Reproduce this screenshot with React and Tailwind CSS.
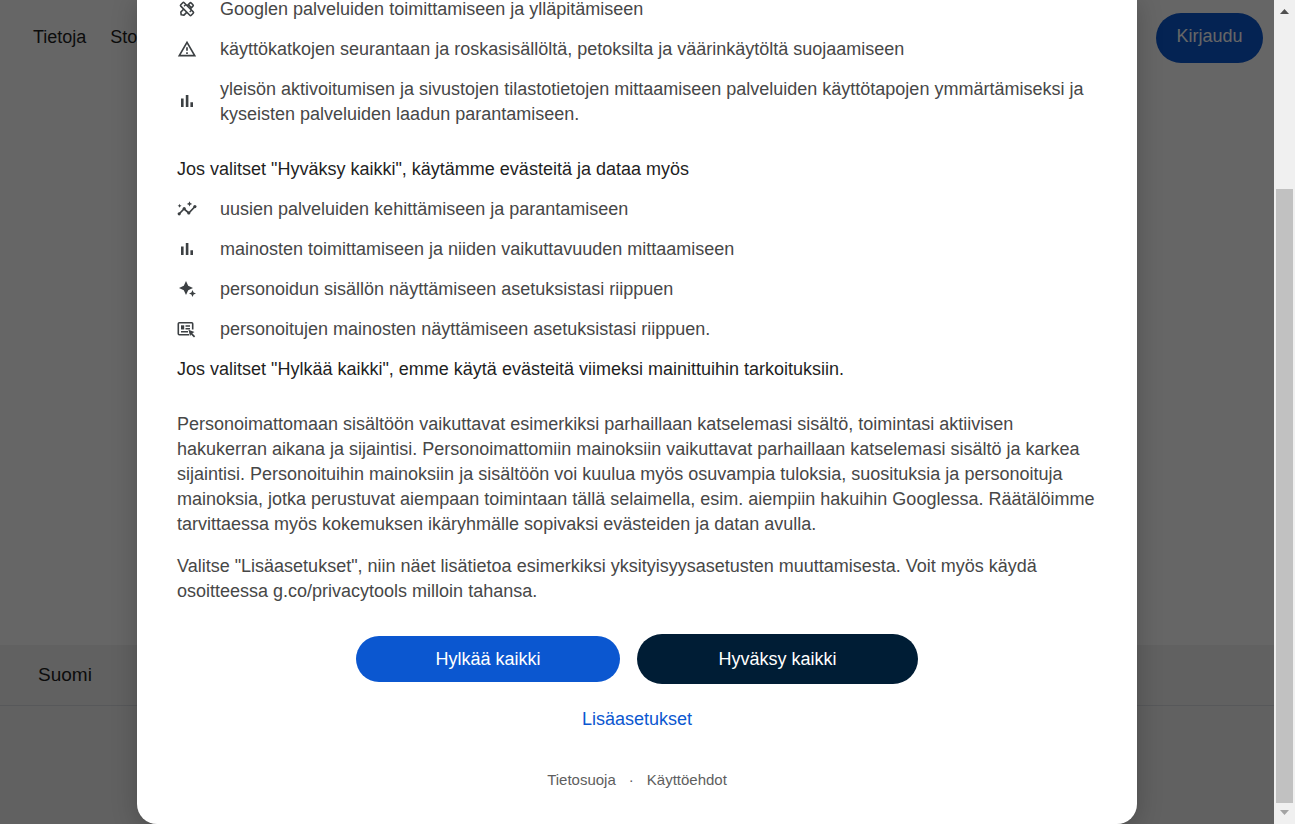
import React from "react";
import { MdOutlineWarningAmber } from "react-icons/md";

function Tools() {
  return (
    <svg viewBox="0 0 20 20" className="h-5 w-5" fill="none" stroke="currentColor" strokeWidth="1.6" aria-hidden="true">
      <g transform="rotate(-45 10 10)">
        <path d="M3.500 7.800h12.700a1 1 0 0 1 1 1v2.400a1 1 0 0 1-1 1H3.500L1.800 10z" strokeLinejoin="round" />
        <path d="M14 7.800v4.400" />
      </g>
      <g transform="rotate(45 10 10)">
        <rect x="2.600" y="7.600" width="14.800" height="4.800" rx="1" fill="white" />
        <path d="M6 7.600v2.600M14 7.600v2.600" strokeWidth="1.300" />
      </g>
    </svg>
  );
}

function Insights() {
  return (
    <svg viewBox="0 0 20 20" className="h-5 w-5" fill="currentColor" aria-hidden="true">
      <path d="M2 15l5-5.200 4.800 4.200L18 7.500" fill="none" stroke="currentColor" strokeWidth="1.700" />
      <circle cx="2.200" cy="14.800" r="1.600" />
      <circle cx="7.200" cy="9.600" r="1.600" />
      <circle cx="11.800" cy="14" r="1.600" />
      <circle cx="17.900" cy="7.600" r="1.600" />
      <path d="M12.500 2.200l.8 1.900 1.900.8-1.900.8-.8 1.900-.8-1.900-1.900-.8 1.900-.8z" />
      <path d="M2.600 4.800l.6 1.400 1.400.6-1.400.6-.6 1.400L2 7.400.6 6.800 2 6.200z" />
    </svg>
  );
}

function Bars() {
  return (
    <svg viewBox="0 0 20 20" className="h-5 w-5" fill="currentColor" aria-hidden="true">
      <path d="M4 7.500h2.600V16H4zM8.800 4h2.600v12H8.800zM13.400 11.200H16V16h-2.600z" />
    </svg>
  );
}

function Sparkle() {
  return (
    <svg viewBox="0 0 20 20" className="h-5 w-5" fill="currentColor" aria-hidden="true">
      <path d="M9 2l2.200 4.800L16 9l-4.800 2.200L9 16l-2.200-4.800L2 9l4.800-2.200z" />
      <path d="M15.500 11l1.100 2.400L19 14.500l-2.400 1.100-1.100 2.400-1.100-2.400-2.400-1.100 2.400-1.100z" />
    </svg>
  );
}

function AdCursor() {
  return (
    <svg viewBox="0 0 20 20" className="h-5 w-5" fill="none" stroke="currentColor" strokeWidth="1.6" aria-hidden="true">
      <path d="M12 15.700H2.300a1 1 0 0 1-1-1V4.800a1 1 0 0 1 1-1h12.400a1 1 0 0 1 1 1v5.700" />
      <path d="M8.500 7H13M8.500 9.800H13M4 12.700h7" strokeWidth="1.4" />
      <path d="M4 6.300h3.200v4.200H4z" fill="currentColor" stroke="none" />
      <path d="M11.500 10.800l6 2.200-2.200 1.200 2.900 3-1.200 1.200-3-2.900-1 1.800z" fill="currentColor" stroke="none" />
    </svg>
  );
}

function Row({ icon, children }) {
  return (
    <li className="flex items-center gap-[23px]">
      <span className="flex h-[22px] w-5 shrink-0 items-center justify-center pb-0.5 text-[#3c4043]">{icon}</span>
      <span>{children}</span>
    </li>
  );
}

function Backdrop() {
  return (
    <div className="flex min-h-screen flex-col bg-white text-[#1f1f1f]">
      <header className="flex items-start justify-between px-[11px] pt-[13px] text-lg leading-6">
        <nav className="flex gap-6 pt-3 pl-[22px]">
          <a href="#tietoja">Tietoja</a>
          <a href="#store">Store</a>
        </nav>
        <button type="button" className="h-[50px] w-[107px] rounded-full bg-[#0b57d0] pb-1 text-white">
          Kirjaudu
        </button>
      </header>
      <footer className="mt-auto h-[179px] bg-[#f2f2f2]">
        <div className="flex h-[61px] items-center border-b border-[#dadce0] px-[38px] text-[19px]">Suomi</div>
      </footer>
    </div>
  );
}

function Consent() {
  return (
    <section
      role="dialog"
      aria-label="Evästeet"
      className="mx-auto w-full max-w-[1000px] rounded-b-[20px] bg-white px-10 pb-8 text-lg leading-[25px] text-[#474747] shadow-[0_5px_26px_rgba(0,0,0,0.22)]"
    >
      <ul className="-mt-[3px] flex flex-col gap-[15px]">
        <Row icon={<Tools />}>Googlen palveluiden toimittamiseen ja ylläpitämiseen</Row>
        <Row icon={<MdOutlineWarningAmber size={20} />}>
          käyttökatkojen seurantaan ja roskasisällöltä, petoksilta ja väärinkäytöltä suojaamiseen
        </Row>
        <Row icon={<Bars />}>
          yleisön aktivoitumisen ja sivustojen tilastotietojen mittaamiseen palveluiden käyttötapojen ymmärtämiseksi ja
          kyseisten palveluiden laadun parantamiseen.
        </Row>
      </ul>
      <p className="mt-[30px] text-[#1f1f1f]">Jos valitset "Hyväksy kaikki", käytämme evästeitä ja dataa myös</p>
      <ul className="my-[15px] flex flex-col gap-[15px]">
        <Row icon={<Insights />}>uusien palveluiden kehittämiseen ja parantamiseen</Row>
        <Row icon={<Bars />}>mainosten toimittamiseen ja niiden vaikuttavuuden mittaamiseen</Row>
        <Row icon={<Sparkle />}>personoidun sisällön näyttämiseen asetuksistasi riippuen</Row>
        <Row icon={<AdCursor />}>personoitujen mainosten näyttämiseen asetuksistasi riippuen.</Row>
      </ul>
      <p className="text-[#1f1f1f]">Jos valitset "Hylkää kaikki", emme käytä evästeitä viimeksi mainittuihin tarkoituksiin.</p>
      <p className="mt-[30px]">
        Personoimattomaan sisältöön vaikuttavat esimerkiksi parhaillaan katselemasi sisältö, toimintasi aktiivisen
        hakukerran aikana ja sijaintisi. Personoimattomiin mainoksiin vaikuttavat parhaillaan katselemasi sisältö ja
        karkea sijaintisi. Personoituihin mainoksiin ja sisältöön voi kuulua myös osuvampia tuloksia, suosituksia ja
        personoituja mainoksia, jotka perustuvat aiempaan toimintaan tällä selaimella, esim. aiempiin hakuihin
        Googlessa. Räätälöimme tarvittaessa myös kokemuksen ikäryhmälle sopivaksi evästeiden ja datan avulla.
      </p>
      <p className="mt-[17px]">
        Valitse "Lisäasetukset", niin näet lisätietoa esimerkiksi yksityisyysasetusten muuttamisesta. Voit myös käydä
        osoitteessa g.co/privacytools milloin tahansa.
      </p>
      <div className="mt-[30px] flex items-center justify-center gap-[17px] text-white">
        <button type="button" className="h-[46px] w-[264px] rounded-full bg-[#0b57d0]">
          Hylkää kaikki
        </button>
        <button type="button" className="h-[50px] w-[281px] rounded-full bg-[#001d35]">
          Hyväksy kaikki
        </button>
      </div>
      <div className="mt-[23px] text-center">
        <a href="#lisaasetukset" className="text-[#0b57d0]">
          Lisäasetukset
        </a>
      </div>
      <div className="mt-[35px] flex justify-center gap-[13px] text-[15px] text-[#5e5e5e]">
        <a href="#tietosuoja">Tietosuoja</a>
        <span>·</span>
        <a href="#kayttoehdot">Käyttöehdot</a>
      </div>
    </section>
  );
}

function Scrollbar() {
  return (
    <div className="flex w-[21px] shrink-0 flex-col items-center bg-[#f0f0f0]" aria-hidden="true">
      <svg viewBox="0 0 9 5" className="mt-[9px] h-[5px] w-[9px]" fill="#505050">
        <path d="M0 5L4.500 0 9 5z" />
      </svg>
      <div className="mt-[175px] mb-[7px] w-[17px] flex-1 bg-[#c1c1c1]" />
      <svg viewBox="0 0 9 5" className="mb-[9px] h-[5px] w-[9px]" fill="#a3a3a3">
        <path d="M0 0h9L4.500 5z" />
      </svg>
    </div>
  );
}

export default function App() {
  return (
    <div className="flex min-h-screen font-['Liberation_Sans',Arial,sans-serif]">
      <div className="relative min-w-0 flex-1 overflow-hidden">
        <Backdrop />
        <div className="absolute inset-0 bg-black/60">
          <Consent />
        </div>
      </div>
      <Scrollbar />
    </div>
  );
}
